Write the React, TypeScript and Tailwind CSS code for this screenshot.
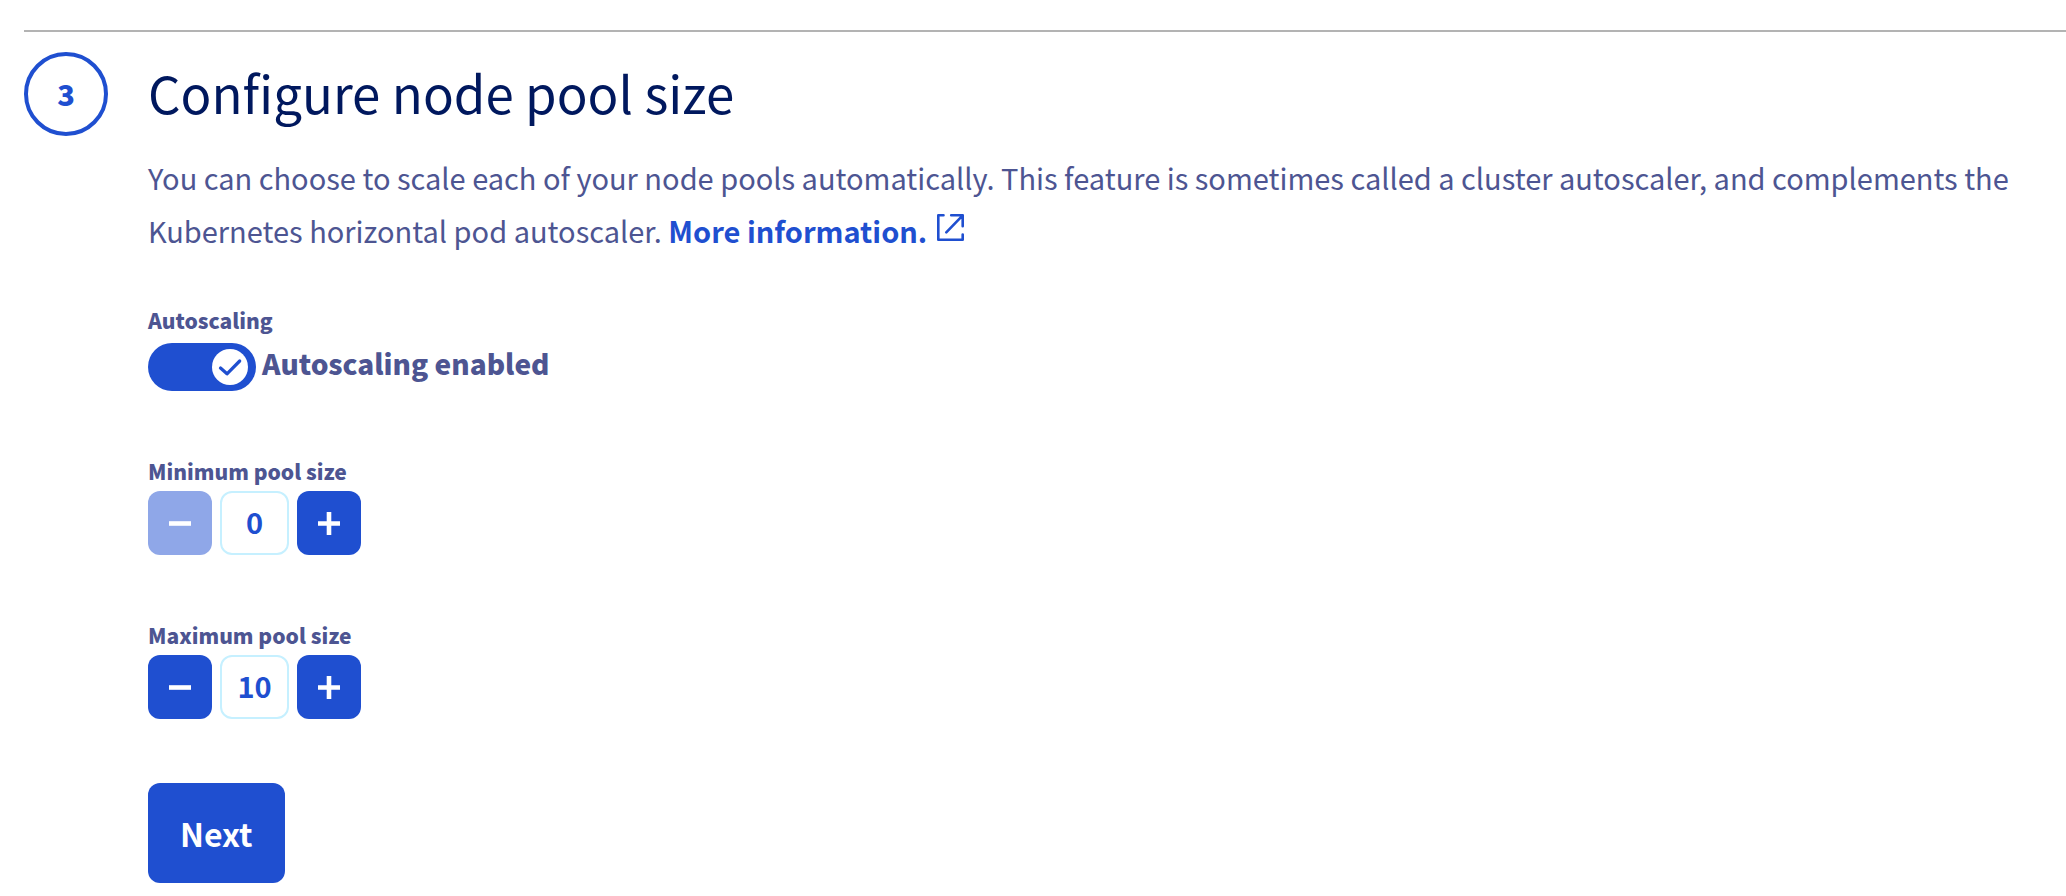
import { useState } from 'react';

function Glyph({ plus }: { plus?: boolean }) {
  return (
    <svg viewBox="0 0 24 24" className="size-6" stroke="currentColor" strokeWidth="4.6" aria-hidden="true">
      <path d={plus ? 'M1 12.5h22M12 1v23' : 'M1 12.5h22'} />
    </svg>
  );
}

function Quantity({ id, label, initial }: { id: string; label: string; initial: number }) {
  const [value, setValue] = useState(initial);
  const button =
    'flex size-16 items-center justify-center rounded-xl bg-[#1f4fd0] text-white disabled:bg-[#8fa7e8]';
  return (
    <div className="mt-16">
      <label htmlFor={id} className="block text-[21px] leading-8 font-black">
        {label}
      </label>
      <div className="mt-1 flex gap-2">
        <button type="button" aria-label={`Decrease ${label}`} className={button} disabled={value === 0} onClick={() => setValue(value - 1)}>
          <Glyph />
        </button>
        <input
          id={id}
          value={value}
          inputMode="numeric"
          onChange={(e) => setValue(Number(e.target.value) || 0)}
          className="h-16 w-[69px] rounded-xl border-2 border-[#c6f0ff] pb-1 text-center text-[29px] font-bold text-[#1f4fd0]"
        />
        <button type="button" aria-label={`Increase ${label}`} className={button} onClick={() => setValue(value + 1)}>
          <Glyph plus />
        </button>
      </div>
    </div>
  );
}

export default function App() {
  const [auto, setAuto] = useState(true);
  return (
    <main className="bg-white pt-[30px] pl-6 font-['Noto_Sans_CJK_SC',sans-serif] text-[#4d5592]">
      <section className="flex gap-10 border-t-2 border-[#b3b3b3] pt-5">
        <div className="flex size-[84px] shrink-0 items-center justify-center rounded-full border-4 border-[#1f4fd0] text-[29px] font-black text-[#1f4fd0]">
          3
        </div>
        <div className="min-w-0 flex-1 pr-8">
          <h2 className="text-[51px] leading-[80px] text-[#00185e]">Configure node pool size</h2>
          <p className="mt-[19px] text-[29px] leading-[53px]">
            You can choose to scale each of your node pools automatically. This feature is sometimes called a cluster
            autoscaler, and complements the Kubernetes horizontal pod autoscaler.{' '}
            <a href="#more" className="font-bold text-[#1f4fd0]">
              More information.
              <svg viewBox="0 0 27 27" className="mb-4 ml-2.5 inline size-[27px]" fill="none" stroke="currentColor" strokeWidth="2.6" strokeLinecap="round" strokeLinejoin="round" aria-hidden="true">
                <path d="M6.5 1.3H1.3v24.4h24.4v-5.2M14.2 1.3h11.5v11M25.7 1.3L9.3 18.3" />
              </svg>
            </a>
          </p>
          <div className="mt-[47px] text-[21px] leading-8 font-black">Autoscaling</div>
          <label className="mt-[7px] flex w-fit items-start gap-1.5 text-[28px] leading-10 font-black">
            <input type="checkbox" role="switch" className="peer sr-only" checked={auto} onChange={() => setAuto(!auto)} />
            <span className="flex h-12 w-[108px] items-center justify-start rounded-full bg-[#8fa7e8] px-2 peer-checked:justify-end peer-checked:bg-[#1f4fd0]">
              <svg viewBox="0 0 36 36" className="size-9 text-[#1f4fd0]" aria-hidden="true">
                <circle cx="18" cy="18" r="18" fill="#fff" />
                {auto && (
                  <path d="M8.5 19l6.5 5.8L27.7 12" fill="none" stroke="currentColor" strokeWidth="3.2" strokeLinecap="round" strokeLinejoin="round" />
                )}
              </svg>
            </span>
            {auto ? 'Autoscaling enabled' : 'Autoscaling disabled'}
          </label>
          <Quantity id="min" label="Minimum pool size" initial={0} />
          <Quantity id="max" label="Maximum pool size" initial={10} />
          <button type="button" className="mt-16 h-[100px] rounded-xl bg-[#1f4fd0] px-8 text-[32px] font-bold text-white">
            Next
          </button>
        </div>
      </section>
    </main>
  );
}
